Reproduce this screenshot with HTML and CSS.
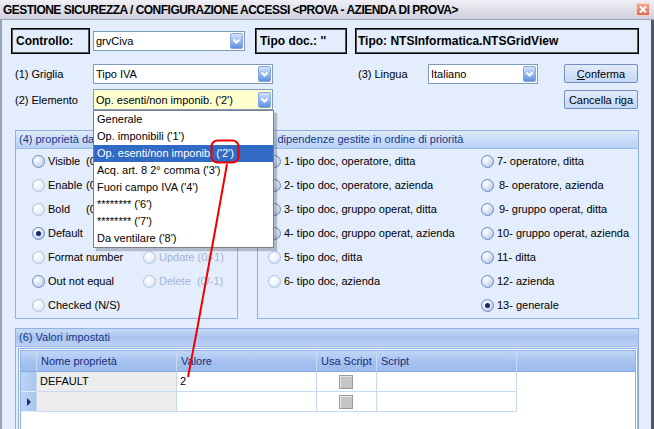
FILE: index.html
```html
<!DOCTYPE html>
<html>
<head>
<meta charset="utf-8">
<link rel="stylesheet" href="styles.css">
</head>
<body>
<div class="window">
  <div class="titlebar">
    <span class="title">GESTIONE SICUREZZA / CONFIGURAZIONE ACCESSI &lt;PROVA - AZIENDA DI PROVA&gt;</span>
    <span class="close"><svg width="14" height="13" viewBox="0 0 14 13"><path d="M4 3.5 L10 9.5 M10 3.5 L4 9.5" stroke="#fff" stroke-width="2" fill="none"/></svg></span>
  </div>
  <div class="body">
    <div class="row1">
      <div class="box box-ctrl">Controllo:</div>
      <div class="combo combo-ctrl"><span>grvCiva</span><span class="cbtn"><svg width="13" height="16" viewBox="0 0 13 16"><path d="M3.5 6.5 L6.5 9.5 L9.5 6.5" fill="none" stroke="#fff" stroke-width="2"/></svg></span></div>
      <div class="box box-tipodoc">Tipo doc.: ''</div>
      <div class="box box-tipo">Tipo: NTSInformatica.NTSGridView</div>
    </div>
    <div class="form">
      <span class="lbl">(1) Griglia</span>
      <div class="combo"><span>Tipo IVA</span><span class="cbtn"><svg width="13" height="16" viewBox="0 0 13 16"><path d="M3.5 6.5 L6.5 9.5 L9.5 6.5" fill="none" stroke="#fff" stroke-width="2"/></svg></span></div>
      <span></span>
      <span class="lbl">(3) Lingua</span>
      <div class="combo"><span>Italiano</span><span class="cbtn"><svg width="13" height="16" viewBox="0 0 13 16"><path d="M3.5 6.5 L6.5 9.5 L9.5 6.5" fill="none" stroke="#fff" stroke-width="2"/></svg></span></div>
      <span></span>
      <button class="btn"><u>C</u>onferma</button>
      <span class="lbl">(2) Elemento</span>
      <div class="combo yellow"><span>Op. esenti/non imponib. ('2')</span><span class="cbtn"><svg width="13" height="16" viewBox="0 0 13 16"><path d="M3.5 6.5 L6.5 9.5 L9.5 6.5" fill="none" stroke="#fff" stroke-width="2"/></svg></span></div>
      <button class="btn btn-del">Cancella riga</button>
    </div>
    <div class="groups">
      <div class="group g4">
        <div class="ghead"><span class="clip78">(4) proprietà da modificare</span></div>
        <div class="g4body">
          <div class="opt"><span class="radio"></span><span class="w38">Visible</span><span class="clip7">(0/-1)</span></div><div></div>
          <div class="opt"><span class="radio lt"></span><span class="w38">Enable</span><span class="clip7">(0/-1)</span></div><div></div>
          <div class="opt"><span class="radio lt"></span><span class="w38">Bold</span><span class="clip7">(0/-1)</span></div><div></div>
          <div class="opt"><span class="radio on"></span><span>Default</span></div><div></div>
          <div class="opt"><span class="radio lt"></span><span>Format number</span></div>
          <div class="opt dis"><span class="radio lt"></span><span>Update (0/-1)</span></div>
          <div class="opt"><span class="radio"></span><span>Out not equal</span></div>
          <div class="opt dis"><span class="radio lt"></span><span>Delete&nbsp; (0/-1)</span></div>
          <div class="opt"><span class="radio lt"></span><span>Checked (N/S)</span></div><div></div>
        </div>
      </div>
      <div class="group g5">
        <div class="ghead">(5) dipendenze gestite in ordine di priorità</div>
        <div class="g5body">
          <div class="col col1">
            <div class="opt"><span class="radio"></span><span>1- tipo doc, operatore, ditta</span></div>
            <div class="opt"><span class="radio"></span><span>2- tipo doc, operatore, azienda</span></div>
            <div class="opt"><span class="radio"></span><span>3- tipo doc, gruppo operat, ditta</span></div>
            <div class="opt"><span class="radio"></span><span>4- tipo doc, gruppo operat, azienda</span></div>
            <div class="opt"><span class="radio lt"></span><span>5- tipo doc, ditta</span></div>
            <div class="opt"><span class="radio lt"></span><span>6- tipo doc, azienda</span></div>
          </div>
          <div class="col">
            <div class="opt"><span class="radio"></span><span>7- operatore, ditta</span></div>
            <div class="opt"><span class="radio"></span><span class="sp">8- operatore, azienda</span></div>
            <div class="opt"><span class="radio"></span><span class="sp">9- gruppo operat, ditta</span></div>
            <div class="opt"><span class="radio"></span><span>10- gruppo operat, azienda</span></div>
            <div class="opt"><span class="radio"></span><span>11- ditta</span></div>
            <div class="opt"><span class="radio"></span><span>12- azienda</span></div>
            <div class="opt"><span class="radio on"></span><span>13- generale</span></div>
          </div>
        </div>
      </div>
    </div>
    <div class="group g6">
      <div class="ghead g6head">(6) Valori impostati</div>
      <div class="g6body">
        <div class="grid">
          <div class="hc sel"></div>
          <div class="hc">Nome proprietà</div>
          <div class="hc">Valore</div>
          <div class="hc">Usa Script</div>
          <div class="hc">Script</div>
          <div class="hc last"></div>

          <div class="c sel"></div>
          <div class="c gray">DEFAULT</div>
          <div class="c">2</div>
          <div class="c ctr"><span class="chk"></span></div>
          <div class="c"></div>
          <div class="c none"></div>

          <div class="c sel"><span class="tri"></span></div>
          <div class="c gray"></div>
          <div class="c"></div>
          <div class="c ctr"><span class="chk"></span></div>
          <div class="c"></div>
          <div class="c none"></div>
        </div>
      </div>
    </div>
  </div>
</div>

<div class="dropdown">
  <div class="item">Generale</div>
  <div class="item">Op. imponibili ('1')</div>
  <div class="item sel-item">Op. esenti/non imponib. ('2')</div>
  <div class="item">Acq. art. 8 2° comma ('3')</div>
  <div class="item">Fuori campo IVA ('4')</div>
  <div class="item">******** ('6')</div>
  <div class="item">******** ('7')</div>
  <div class="item">Da ventilare ('8')</div>
</div>

<svg class="annot" width="654" height="429" viewBox="0 0 654 429">
  <rect x="211.5" y="140.5" width="27" height="22" rx="6" fill="none" stroke="#ee0000" stroke-width="2"/>
  <polyline points="227,164 217,220 197,330 188,377" fill="none" stroke="#ee0000" stroke-width="2"/>
</svg>
</body>
</html>
```

FILE: styles.css
```css
html, body {
  margin: 0;
  padding: 0;
}
body {
  width: 654px;
  height: 429px;
  overflow: hidden;
  position: relative;
  font-family: "Liberation Sans", Arial, sans-serif;
  font-size: 11px;
  color: #000;
  background: #e3edfb;
}
.window {
  display: flex;
  flex-direction: column;
  height: 429px;
}
.titlebar {
  height: 20px;
  flex: none;
  box-sizing: border-box;
  display: flex;
  align-items: center;
  justify-content: space-between;
  padding: 0 4px 0 3px;
  background: linear-gradient(#efeff5, #d0d0de);
  border-bottom: 1px solid #a3a3b8;
}
.title {
  font-weight: bold;
  font-size: 12px;
  letter-spacing: -0.52px;
}
.close {
  width: 14px;
  height: 13px;
  display: block;
  box-sizing: border-box;
  background: linear-gradient(#f2a495, #e26a56);
  border: 1px solid #f6d2ca;
  border-radius: 1px;
}
.close svg {
  display: block;
  margin: -1px 0 0 -1px;
}
.body {
  flex: 1;
  border-left: 2px solid #9aa2b5;
  border-right: 3px solid #50566a;
  padding-top: 8px;
  overflow: hidden;
}
.row1 {
  display: flex;
  align-items: center;
  height: 26px;
  padding-left: 9px;
}
.box {
  height: 26px;
  box-sizing: border-box;
  border: 1px solid #000;
  box-shadow: inset 0 0 0 1px #555;
  display: flex;
  align-items: center;
  font-weight: bold;
  font-size: 12px;
  padding-left: 4px;
}
.box-ctrl { width: 79px; margin-right: 3px; }
.combo-ctrl { width: 152px; margin-right: 10px; }
.box-tipodoc { width: 92px; margin-right: 8px; }
.box-tipo { width: 284px; padding-left: 2px; }
.combo {
  height: 20px;
  box-sizing: border-box;
  background: #fff;
  border: 1px solid #7f9db9;
  display: flex;
  align-items: center;
  justify-content: space-between;
  padding-left: 2px;
}
.combo.yellow { background: #ffffd0; height: 21px; }
.cbtn {
  width: 13px;
  height: 16px;
  margin-right: 1px;
  box-sizing: border-box;
  border: 1px solid #86a6dc;
  border-radius: 2px;
  background: linear-gradient(#d3e3fd, #92b6f2 55%, #5f8fe2);
  display: block;
}
.cbtn svg {
  display: block;
  margin: -1px 0 0 -1px;
}
.form {
  display: grid;
  grid-template-columns: 78px 180px 85px 70px 110px 26px 74px;
  grid-template-rows: 21px 21px;
  row-gap: 5px;
  align-items: center;
  padding-left: 13px;
  margin-top: 9px;
}
.btn {
  height: 19px;
  margin: 0;
  padding: 0;
  box-sizing: border-box;
  border: 1px solid #7490c2;
  border-radius: 2px;
  background: linear-gradient(#e2ecfb, #c4d7f4);
  font-family: "Liberation Sans", Arial, sans-serif;
  font-size: 11px;
  color: #000;
}
.btn-del { grid-column: 7; }
.groups {
  display: flex;
  gap: 19px;
  padding-left: 13px;
  margin-top: 20px;
}
.group {
  box-sizing: border-box;
  border: 1px solid #8fb1e4;
}
.g4 { width: 223px; height: 189px; }
.g5 { width: 382px; height: 189px; }
.ghead {
  height: 17px;
  box-sizing: content-box;
  border-bottom: 1px solid #9dbbe9;
  background: linear-gradient(#e0eafa, #cddff8 45%, #b9d0f3);
  color: #17378a;
  padding-left: 3px;
  line-height: 17px;
  white-space: nowrap;
  overflow: hidden;
}
.clip78 {
  display: inline-block;
  width: 78px;
  overflow: hidden;
  vertical-align: top;
}
.clip7 {
  display: inline-block;
  width: 7px;
  overflow: hidden;
}
.g4body {
  display: grid;
  grid-template-columns: 111px auto;
  grid-auto-rows: 24px;
  padding-left: 16px;
}
.g5body {
  display: flex;
  padding-left: 10px;
}
.col1 { width: 213px; }
.opt {
  display: flex;
  align-items: center;
  height: 24px;
  white-space: nowrap;
}
.opt.dis { color: #a3b5d8; }
.w38 { display: inline-block; width: 38px; }
.sp { padding-left: 2px; }
.radio {
  width: 13px;
  height: 13px;
  box-sizing: border-box;
  border-radius: 50%;
  border: 1px solid #6d8cc2;
  background: radial-gradient(circle at 35% 30%, #ffffff 0, #dbe5f6 45%, #a6bde5 100%);
  margin-right: 3px;
  flex: none;
  position: relative;
}
.radio.lt {
  border-color: #abc0e0;
  background: radial-gradient(circle at 35% 30%, #ffffff 0, #ecf2fb 50%, #cad8ef 100%);
}
.radio.on::after {
  content: "";
  position: absolute;
  left: 3px;
  top: 3px;
  width: 5px;
  height: 5px;
  border-radius: 50%;
  background: #1b2a66;
}
.g6 {
  width: 624px;
  height: 120px;
  margin-left: 13px;
  margin-top: 9px;
}
.g6head {
  background: linear-gradient(#c9dbf6, #a9c4ef 50%, #bcd2f4);
}
.g6body {
  padding: 1px 0 0 2px;
}
.grid {
  border: 3px double #8fb1e4;
  background: #fff;
  height: 110px;
  display: grid;
  grid-template-columns: 16px 140px 140px 60px 140px 1fr;
  grid-template-rows: 21px 20px 20px;
}
.hc {
  background: linear-gradient(#c0d6f6, #a3c1ef 60%, #9cbcee);
  border-right: 1px solid #c8daf4;
  border-bottom: 1px solid #86aae3;
  color: #1a2c7c;
  padding-left: 4px;
  line-height: 21px;
  box-sizing: border-box;
  white-space: nowrap;
}
.hc.sel { padding: 0; }
.hc.last { border-right: none; }
.c {
  border-right: 1px solid #c7d9f3;
  border-bottom: 1px solid #c7d9f3;
  box-sizing: border-box;
  padding-left: 3px;
  line-height: 19px;
}
.c.sel {
  background: linear-gradient(90deg, #bed4f5, #a9c5ef);
  border-bottom: 1px solid #e4edfb;
  display: flex;
  align-items: center;
  padding-left: 6px;
}
.c.gray { background: #ececec; }
.c.none { border: none; }
.c.ctr {
  display: flex;
  align-items: center;
  justify-content: center;
  padding: 0;
}
.chk {
  width: 14px;
  height: 14px;
  box-sizing: border-box;
  border: 1px solid #9c9c9c;
  background: #c5c5c5;
  box-shadow: inset 1px 1px 0 #e6e6e6;
  margin-left: -2px;
}
.tri {
  width: 0;
  height: 0;
  border-top: 4px solid transparent;
  border-bottom: 4px solid transparent;
  border-left: 4px solid #1b2a6b;
}
.dropdown {
  position: absolute;
  left: 93px;
  top: 110px;
  width: 181px;
  height: 138px;
  box-sizing: border-box;
  background: #fff;
  border: 1px solid #7b7f88;
  box-shadow: 3px 3px 1px rgba(60, 70, 90, 0.3);
}
.item {
  height: 17px;
  line-height: 17px;
  padding-left: 3px;
  white-space: nowrap;
}
.sel-item {
  background: #316ac5;
  color: #fff;
}
.annot {
  position: absolute;
  left: 0;
  top: 0;
  pointer-events: none;
}
```
